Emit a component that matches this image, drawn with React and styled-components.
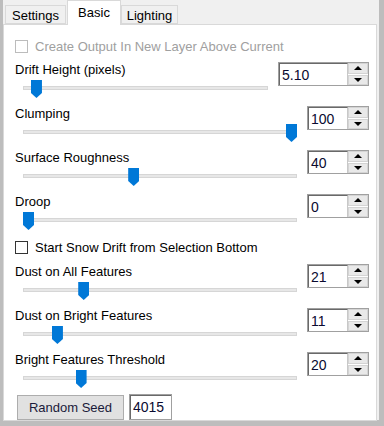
import React from 'react';
import styled, { createGlobalStyle } from 'styled-components';

const GlobalStyle = createGlobalStyle`
  html, body {
    margin: 0;
    padding: 0;
    background: #bdbdbd;
  }
  * {
    box-sizing: border-box;
  }
`;

// Window chrome
const Window = styled.div`
  width: 384px;
  height: 426px;
  background: #bdbdbd;
  padding: 0 5px 6px 3px;
  font-family: "Liberation Sans", Arial, sans-serif;
  font-size: 13px;
  color: #000;
`;

const Frame = styled.div`
  height: 100%;
  background: #f0f0f0;
  display: flex;
  flex-direction: column;
  padding: 0 2px 1px 0;
`;

const TabStrip = styled.div`
  display: flex;
  align-items: flex-end;
  height: 24px;
  padding-left: 2px;
  position: relative;
  z-index: 1;
`;

const Tab = styled.div`
  width: ${p => p.$width}px;
  height: ${p => (p.$active ? 25 : 19)}px;
  margin-bottom: ${p => (p.$active ? -1 : 0)}px;
  margin-left: ${p => p.$ml || 0}px;
  border: 1px solid #d9d9d9;
  border-bottom: ${p => (p.$active ? 'none' : '1px solid #d9d9d9')};
  background: ${p => (p.$active ? '#fff' : '#f0f0f0')};
  text-align: center;
  line-height: ${p => (p.$active ? 20 : 18)}px;
  padding-top: ${p => (p.$active ? 2 : 1)}px;
`;

const Panel = styled.div`
  flex: 1;
  background: #fff;
  border: 1px solid #d9d9d9;
  padding: 12px 7px 0 11px;
  display: flex;
  flex-direction: column;
`;

// Check boxes
const CheckRow = styled.label`
  display: flex;
  align-items: flex-start;
  gap: 7px;
  height: ${p => p.$h}px;
  padding-top: 2px;
  line-height: 15px;
  color: ${p => (p.$disabled ? '#a0a0a0' : '#000')};
`;

const Box = styled.span`
  width: 13px;
  height: 13px;
  margin-top: 1px;
  border: 1px solid ${p => (p.$disabled ? '#bcbcbc' : '#333')};
  background: #fff;
  flex: none;
`;

// Slider rows
const SliderRow = styled.div`
  display: flex;
  align-items: flex-start;
  gap: 10px;
  height: 44px;
`;

const SliderCol = styled.div`
  flex: 1;
  display: flex;
  flex-direction: column;
`;

const Label = styled.div`
  line-height: 15px;
  height: 15px;
  white-space: nowrap;
`;

const TrackArea = styled.div`
  position: relative;
  height: 29px;
  margin-left: 8px;
`;

const Track = styled.div`
  position: absolute;
  left: 0;
  right: 0;
  top: 9px;
  height: 4px;
  background: #e7e7e7;
  border: 1px solid #d6d6d6;
`;

const Thumb = styled.div`
  position: absolute;
  top: 3px;
  width: 11px;
  height: 18px;
  background: #0078d7;
  clip-path: polygon(0 0, 100% 0, 100% 72%, 50% 100%, 0 72%);
`;

const SpinBox = styled.div`
  display: flex;
  width: ${p => p.$width}px;
  height: 24px;
  border: 1px solid #a0a0a0;
  flex: none;
`;

const SpinField = styled.div`
  flex: 1;
  border-top: 1px solid #696969;
  border-left: 1px solid #696969;
  border-right: 1px solid #c8c8c8;
  padding: 2px 0 0 2px;
  font-size: 14px;
  line-height: 18px;
  color: #0a0a30;
`;

const SpinButtons = styled.div`
  width: 20px;
  display: flex;
  flex-direction: column;
  gap: 1px;
  background: #fff;
`;

const SpinButton = styled.div`
  flex: 1;
  background: #e9e9e9;
  border: 1px solid #d4d4d4;
  display: flex;
  align-items: center;
  justify-content: center;
`;

const Arrow = styled.span`
  width: 0;
  height: 0;
  border-left: 4px solid transparent;
  border-right: 4px solid transparent;
  ${p => (p.$up ? 'border-bottom: 4px solid #000;' : 'border-top: 4px solid #000;')}
`;

// Footer
const Footer = styled.div`
  display: flex;
  align-items: center;
  gap: 5px;
  margin-top: -2px;
  padding-left: 2px;
`;

const Button = styled.div`
  width: 107px;
  height: 25px;
  background: #e1e1e1;
  border: 1px solid #adadad;
  display: flex;
  align-items: center;
  justify-content: center;
  color: #1a1a3a;
`;

const SeedField = styled.div`
  width: 43px;
  height: 26px;
  border: 1px solid #a0a0a0;
  box-shadow: inset 1px 1px 0 #696969;
  padding: 3px 0 0 3px;
  font-size: 14px;
  line-height: 18px;
  color: #0a0a30;
`;

const sliders = [
  { label: 'Drift Height (pixels)', value: '5.10', pos: 5.1 / 150, box: 91 },
  { label: 'Clumping', value: '100', pos: 1, box: 62 },
  { label: 'Surface Roughness', value: '40', pos: 0.4, box: 62 },
  { label: 'Droop', value: '0', pos: 0, box: 62 },
];

const dust = [
  { label: 'Dust on All Features', value: '21', pos: 0.21, box: 62 },
  { label: 'Dust on Bright Features', value: '11', pos: 0.11, box: 62 },
  { label: 'Bright Features Threshold', value: '20', pos: 0.2, box: 62 },
];

const Slider = ({ label, value, pos, box }) => (
  <SliderRow>
    <SliderCol>
      <Label>{label}</Label>
      <TrackArea>
        <Track />
        <Thumb style={{ left: `calc((100% - 11px) * ${pos})` }} />
      </TrackArea>
    </SliderCol>
    <SpinBox $width={box}>
      <SpinField>{value}</SpinField>
      <SpinButtons>
        <SpinButton><Arrow $up /></SpinButton>
        <SpinButton><Arrow /></SpinButton>
      </SpinButtons>
    </SpinBox>
  </SliderRow>
);

export default function App() {
  return (
    <>
      <GlobalStyle />
      <Window>
        <Frame>
          <TabStrip>
            <Tab $width={61}>Settings</Tab>
            <Tab $width={54} $ml={1} $active>Basic</Tab>
            <Tab $width={57}>Lighting</Tab>
          </TabStrip>
          <Panel>
            <CheckRow $h={25} $disabled>
              <Box $disabled />
              Create Output In New Layer Above Current
            </CheckRow>
            {sliders.map(s => <Slider key={s.label} {...s} />)}
            <CheckRow $h={26}>
              <Box />
              Start Snow Drift from Selection Bottom
            </CheckRow>
            {dust.map(s => <Slider key={s.label} {...s} />)}
            <Footer>
              <Button>Random Seed</Button>
              <SeedField>4015</SeedField>
            </Footer>
          </Panel>
        </Frame>
      </Window>
    </>
  );
}
